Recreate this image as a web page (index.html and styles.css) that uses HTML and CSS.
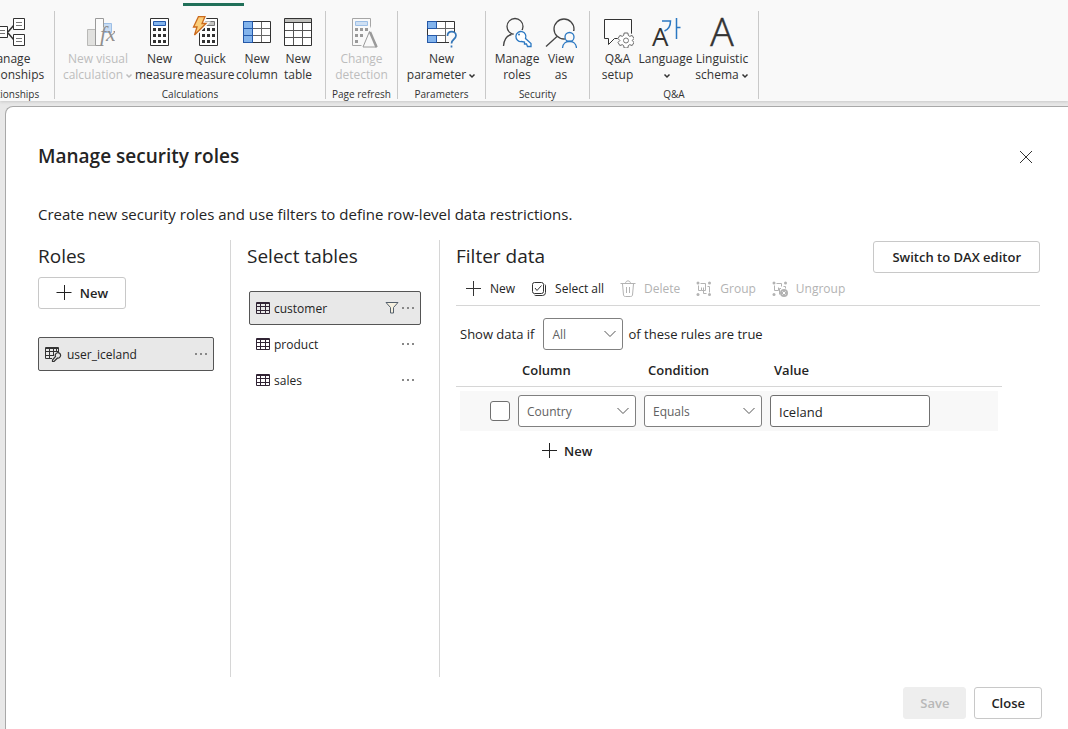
FILE: index.html
```html
<!DOCTYPE html>
<html lang="en">
<head>
<meta charset="utf-8">
<title>Manage security roles</title>
<link rel="stylesheet" href="styles.css">
</head>
<body>
<header class="ribbon">
  <div class="ribbon-tab"></div>
  <section class="group group-relationships">
    <div class="group-items">
      <button class="tool" type="button">
        <svg width="34" height="32" viewBox="0 0 34 32" fill="none" stroke="#333"><path d="M17 16l6-7M17 17l6 7" stroke-width="1.5"/><path fill="#fff" d="M22.500 2.500h11v11h-11zM22.500 18.500h11v11h-11zM5.500 10.500h11v11h-11z"/><path stroke="#777" d="M25 6.500h6M25 9.500h6M25 22.500h6M25 25.500h6M8 14.500h6M8 17.500h6"/></svg>
        <span>Manage<br>relationships</span>
      </button>
    </div>
    <h2>Relationships</h2>
  </section>
  <section class="group group-calculations">
    <div class="group-items">
      <button class="tool tool-visual" type="button" disabled>
        <svg width="34" height="32" viewBox="-4 0 34 32"><path fill="#e1e1df" stroke="#b9b9b7" d="M2.500 13.500h8v16h-8z"/><path fill="#c7dcf3" stroke="#9dbfe6" d="M18.500 7.500h8v9h-8z"/><path fill="#fbfbfb" stroke="#9a9a9a" d="M18.500 29.500h-8v-27h8v9"/><text class="fx" x="15" y="25">fx</text></svg>
        <span>New visual<br>calculation<svg class="caret" width="8" height="6" viewBox="0 0 8 6"><path d="M1.500 1.500L4 4l2.500-2.500"/></svg></span>
      </button>
      <button class="tool tool-measure" type="button">
        <svg width="20" height="32" viewBox="0 0 20 32"><path fill="#fff" stroke="#333" d="M.5 2.500h18v27H.5z"/><path fill="#83b4ec" stroke="#2459ab" d="M3.500 5.500h12v4h-12z"/><path fill="#333" d="M3 12h3v3H3zM8 12h3v3H8zM13 12h3v3h-3zM3 18h3v3H3zM8 18h3v3H8zM13 18h3v3h-3zM3 24h3v3H3zM8 24h3v3H8zM13 24h3v3h-3z"/></svg>
        <span>New<br>measure</span>
      </button>
      <button class="tool tool-quick" type="button">
        <svg width="38" height="32" viewBox="0 0 38 32"><path fill="#fff" stroke="#333" d="M8.500 2.500h18v27h-18z"/><path fill="#c5c5c2" stroke="#777" d="M11.500 5.500h12v4h-12z"/><path fill="#333" d="M11 12h3v3h-3zM16 12h3v3h-3zM21 12h3v3h-3zM11 18h3v3h-3zM16 18h3v3h-3zM21 18h3v3h-3zM11 24h3v3h-3zM16 24h3v3h-3zM21 24h3v3h-3z"/><path fill="#fbcf7b" stroke="#f9f9f9" stroke-width="4" d="M7.500.5h6.500l-3 7h4L3.500 19l2.500-8H2.500z"/><path fill="#fbcf7b" stroke="#cc6a1c" stroke-width="1.300" d="M7.500.5h6.500l-3 7h4L3.500 19l2.500-8H2.500z"/></svg>
        <span>Quick<br>measure</span>
      </button>
      <button class="tool tool-column" type="button">
        <svg width="28" height="32" viewBox="0 0 28 32"><path fill="#fff" d="M0 5h28v22H0z"/><path fill="#83b4ec" d="M0 5h10v22H0z"/><path fill="none" stroke="#666" d="M10 12.500h17M10 19.500h17M18.500 6v20"/><path fill="none" stroke="#333" d="M.5 5.500h27v21H.5z"/><path fill="none" stroke="#2459ab" d="M.5 5.500h9v21h-9zM1 12.500h9M1 19.500h9"/></svg>
        <span>New<br>column</span>
      </button>
      <button class="tool tool-table" type="button">
        <svg width="28" height="32" viewBox="0 0 28 32"><path fill="#fff" d="M0 2h28v28H0z"/><path fill="#bebebb" d="M1 3h26v4H1z"/><path fill="none" stroke="#555" d="M1 14.500h26M1 21.500h26M9.500 7v22M18.500 7v22"/><path fill="none" stroke="#333" d="M.5 2.500h27v27H.5zM1 6.500h26"/></svg>
        <span>New<br>table</span>
      </button>
    </div>
    <h2>Calculations</h2>
  </section>
  <section class="group group-refresh">
    <div class="group-items">
      <button class="tool" type="button" disabled>
        <svg width="34" height="32" viewBox="-6 0 34 32"><path fill="#f9f9f9" stroke="#a6a6a6" d="M2.500 2.500h18v27h-18z"/><path fill="#cfe0f3" stroke="#9dbfe6" d="M5.500 5.500h12v4h-12z"/><path fill="#9a9a9a" d="M5 12h3v3H5zM10 12h3v3h-3zM15 12h3v3h-3zM5 18h3v3H5zM10 18h3v3h-3zM5 24h3v3H5z"/><path fill="#f9f9f9" stroke="#f9f9f9" stroke-width="4" d="M20 15l-7 16h14z"/><path fill="#f9f9f9" stroke="#9a9a9a" d="M19.500 15.500L13 31h14z"/><path stroke="#9a9a9a" stroke-width="2.500" d="M20 16l6.500 15"/></svg>
        <span>Change<br>detection</span>
      </button>
    </div>
    <h2>Page refresh</h2>
  </section>
  <section class="group group-parameters">
    <div class="group-items">
      <button class="tool" type="button">
        <svg width="31" height="32" viewBox="0 0 31 32"><path fill="#fff" d="M1 5h28v21H1z"/><path fill="#83b4ec" d="M1 5h10v7H1zM1 19h10v7H1z"/><path fill="none" stroke="#666" d="M10 12.500h18M10 19.500h11M19.500 6v20"/><path fill="none" stroke="#333" d="M1.500 5.500h27v21h-27z"/><path fill="none" stroke="#2459ab" d="M1.500 5.500h9v7h-9zM1.500 19.500h9v7h-9z"/><path fill="#f9f9f9" d="M20 16h11v16h-8v-6h-3z"/><path fill="none" stroke="#3576b8" stroke-width="1.700" d="M21.500 20c0-6 8.500-5.500 8.500-.5 0 4-4.500 3.500-4.500 8M25.500 29.500v2"/></svg>
        <span>New<br>parameter<svg class="caret" width="8" height="6" viewBox="0 0 8 6"><path d="M1.500 1.500L4 4l2.500-2.500"/></svg></span>
      </button>
    </div>
    <h2>Parameters</h2>
  </section>
  <section class="group group-security">
    <div class="group-items">
      <button class="tool tool-roles" type="button">
        <svg width="30" height="32" viewBox="0 0 30 32" fill="none" stroke="#444" stroke-width="1.300"><circle cx="13" cy="10.500" r="8"/><path d="M1.500 30C2 23 5 19.500 9.500 18.500"/><path fill="#f9f9f9" stroke="#f9f9f9" stroke-width="4" d="M23 20a5 5 0 1 0-3 5.500l2.500 2 2 .5v2h4v-3z"/><path fill="#fff" stroke="#2b78c2" d="M23.500 22.500a5 5 0 1 0-4 3l3 .5v2h2l1 2.500h3.500v-3z"/><circle cx="17" cy="18.500" r="1" fill="#2b78c2" stroke="none"/></svg>
        <span>Manage<br>roles</span>
      </button>
      <button class="tool tool-view" type="button">
        <svg width="32" height="32" viewBox="0 0 32 32" fill="none" stroke="#444" stroke-width="1.300"><circle cx="19" cy="13" r="10"/><path d="M12 20.500L1 30.500"/><path fill="#f9f9f9" stroke="none" d="M19 15h13v17H17v-8h3z"/><g stroke="#2b78c2"><circle cx="24.500" cy="21" r="4.500"/><path d="M17.500 32c.5-9 13.500-9 14 0"/></g></svg>
        <span>View<br>as</span>
      </button>
    </div>
    <h2>Security</h2>
  </section>
  <section class="group group-qa">
    <div class="group-items">
      <button class="tool tool-qa" type="button">
        <svg width="32" height="32" viewBox="0 0 32 32" fill="none" stroke="#333"><path fill="#fdfdfd" d="M2.500 3.500h27v19h-17l-6 6v-6h-4z"/><circle cx="24" cy="24" r="8.500" fill="#f9f9f9" stroke="none"/><path fill="#fff" stroke="#666" stroke-linejoin="round" d="M22.200 17h3.600l.6 2.500 1.300.8 2.500-.8 1.800 3.100-1.900 1.900 1.900 1.900-1.800 3.100-2.500-.8-1.300.8-.6 2.500h-3.600l-.6-2.500-1.300-.8-2.500.8L16 26.400l1.900-1.900L16 22.600l1.800-3.100 2.500.8 1.300-.8z"/><circle cx="24" cy="24.500" r="2.500" stroke="#777"/></svg>
        <span>Q&amp;A<br>setup</span>
      </button>
      <button class="tool tool-language" type="button">
        <svg width="30" height="32" viewBox="0 0 30 32"><path fill="none" stroke="#2b78c2" stroke-width="1.500" d="M11 5h8.500c0 5-2.500 8.500-6 10M25.500 2v21M26 11.500h3.500"/><text class="letter-small" x="1" y="30">A</text></svg>
        <span>Language<br><svg class="caret" width="8" height="6" viewBox="0 0 8 6"><path d="M1.500 1.500L4 4l2.500-2.500"/></svg></span>
      </button>
      <button class="tool tool-linguistic" type="button">
        <svg width="28" height="32" viewBox="0 0 28 32"><text class="letter-large" x="14" y="30">A</text></svg>
        <span>Linguistic<br>schema<svg class="caret" width="8" height="6" viewBox="0 0 8 6"><path d="M1.500 1.500L4 4l2.500-2.500"/></svg></span>
      </button>
    </div>
    <h2>Q&amp;A</h2>
  </section>
</header>

<main class="dialog" role="dialog" aria-labelledby="dialog-title">
  <div class="dialog-head">
    <h1 id="dialog-title">Manage security roles</h1>
    <button class="plain close-icon" type="button" aria-label="Close dialog">
      <svg width="14" height="14" viewBox="0 0 14 14"><path fill="none" stroke="#333" d="M1 1l12 12M13 1L1 13"/></svg>
    </button>
  </div>
  <p class="intro">Create new security roles and use filters to define row-level data restrictions.</p>

  <div class="panes">
    <section class="pane pane-roles">
      <h2>Roles</h2>
      <button class="btn btn-new" type="button">
        <svg width="16" height="16" viewBox="0 0 16 16"><path stroke="#222" d="M.5 7.500h15M8.500 0v15"/></svg>New
      </button>
      <div class="item item-role selected">
        <svg width="17" height="16" viewBox="0 0 17 16" fill="none" stroke="#333"><path d="M7 12.500H.5v-11h13v5M1 2.500h12M1 5.500h12M1 9.500h7M4.500 3v9M8.500 3v7M11.500 3v3"/><path stroke-width="1.200" d="M10.500 10.500a2.700 2.700 0 1 1 2 1.500L9 15.500H7.500V14z"/></svg>
        <span class="item-name">user_iceland</span>
        <button class="plain" type="button" aria-label="More options"><svg width="12" height="4" viewBox="0 0 12 4" fill="#888"><path d="M0 1h2v2H0zM5 1h2v2H5zM10 1h2v2h-2z"/></svg></button>
      </div>
    </section>

    <section class="pane pane-tables">
      <h2>Select tables</h2>
      <ul class="tables">
        <li class="item selected">
          <svg width="14" height="14" viewBox="0 0 14 14" fill="none" stroke="#312434"><path d="M.5 1.500h13v11H.5zM1 2.500h12M1 5.500h12M1 9.500h12M4.500 3v9M9.500 3v9"/></svg>
          <span class="item-name">customer</span>
          <svg class="funnel" width="14" height="12" viewBox="0 0 14 12"><path fill="#f6f0df" stroke="#55606c" d="M1 .5h12l-4.500 5v5.500h-3V5.500z"/></svg>
          <button class="plain" type="button" aria-label="More options"><svg width="12" height="4" viewBox="0 0 12 4" fill="#888"><path d="M0 1h2v2H0zM5 1h2v2H5zM10 1h2v2h-2z"/></svg></button>
        </li>
        <li class="item">
          <svg width="14" height="14" viewBox="0 0 14 14" fill="none" stroke="#312434"><path d="M.5 1.500h13v11H.5zM1 2.500h12M1 5.500h12M1 9.500h12M4.500 3v9M9.500 3v9"/></svg>
          <span class="item-name">product</span>
          <button class="plain" type="button" aria-label="More options"><svg width="12" height="4" viewBox="0 0 12 4" fill="#888"><path d="M0 1h2v2H0zM5 1h2v2H5zM10 1h2v2h-2z"/></svg></button>
        </li>
        <li class="item">
          <svg width="14" height="14" viewBox="0 0 14 14" fill="none" stroke="#312434"><path d="M.5 1.500h13v11H.5zM1 2.500h12M1 5.500h12M1 9.500h12M4.500 3v9M9.500 3v9"/></svg>
          <span class="item-name">sales</span>
          <button class="plain" type="button" aria-label="More options"><svg width="12" height="4" viewBox="0 0 12 4" fill="#888"><path d="M0 1h2v2H0zM5 1h2v2H5zM10 1h2v2h-2z"/></svg></button>
        </li>
      </ul>
    </section>

    <section class="pane pane-filter">
      <div class="filter-head">
        <h2>Filter data</h2>
        <button class="btn btn-dax" type="button">Switch to DAX editor</button>
      </div>
      <div class="toolbar">
        <button class="plain" type="button"><svg width="16" height="16" viewBox="0 0 16 16"><path stroke="#333" d="M0 7.500h15M7.500 0v15"/></svg>New</button>
        <button class="plain" type="button"><svg width="16" height="16" viewBox="0 0 16 16" fill="none" stroke="#333"><rect x="1.500" y="1.500" width="11" height="11" rx="2"/><path d="M4 7l2 2.500L10.500 4.500M14 3.500c.5.500.5 1 .5 1.500v6.500a3 3 0 0 1-3 3H5c-.5 0-1 0-1.500-.5"/></svg>Select all</button>
        <button class="plain" type="button" disabled><svg width="16" height="18" viewBox="0 0 16 18" fill="none" stroke="#b3b3b3"><path d="M.5 3.500h15M5.500 3.500c0-3.500 5-3.500 5 0M2.500 4l1 11c.2 1 .8 1.500 2 1.500h5c1.200 0 1.800-.5 2-1.500l1-11M6.500 7v6M9.500 7v6"/></svg>Delete</button>
        <button class="plain" type="button" disabled><svg width="16" height="16" viewBox="0 0 16 16" fill="none" stroke="#b3b3b3"><path d="M4.500 2.500h5v7h-4v-3M2.500 4.500v5h3M11.500 5.500h2v6M7.500 6.500v6h3"/><g fill="#b3b3b3" stroke="none"><circle cx="2" cy="2" r="1.500"/><circle cx="13.500" cy="2" r="1.500"/><circle cx="2" cy="13.500" r="1.500"/><circle cx="13.500" cy="13.500" r="1.500"/></g></svg>Group</button>
        <button class="plain" type="button" disabled><svg width="16" height="16" viewBox="0 0 16 16" fill="none" stroke="#b3b3b3"><path d="M4.500 2.500h5v3M2.500 4.500v5h4v-3M11.500 5.500h2v2M9 7.500H7.500v6"/><g fill="#b3b3b3" stroke="none"><circle cx="2" cy="2" r="1.500"/><circle cx="13.500" cy="2" r="1.500"/><circle cx="2" cy="13.500" r="1.500"/><circle cx="12" cy="12" r="4"/></g><path stroke="#fff" d="M10.500 10.500l3 3M13.500 10.500l-3 3"/></svg>Ungroup</button>
      </div>
      <div class="match">
        <label for="match-mode">Show data if</label>
        <div class="select select-mode">
          <select id="match-mode"><option>All</option><option>Any</option></select>
          <svg width="12" height="8" viewBox="0 0 12 8"><path d="M.5 1L6 6.500 11.500 1"/></svg>
        </div>
        <span>of these rules are true</span>
      </div>
      <table class="rules">
        <thead>
          <tr><th class="col-check"></th><th class="col-pick">Column</th><th class="col-pick">Condition</th><th>Value</th></tr>
        </thead>
        <tbody>
          <tr>
            <td class="cell-check"><input class="check" type="checkbox" aria-label="Select rule"></td>
            <td><div class="select"><select aria-label="Column"><option>Country</option></select><svg width="12" height="8" viewBox="0 0 12 8"><path d="M.5 1L6 6.500 11.500 1"/></svg></div></td>
            <td><div class="select"><select aria-label="Condition"><option>Equals</option></select><svg width="12" height="8" viewBox="0 0 12 8"><path d="M.5 1L6 6.500 11.500 1"/></svg></div></td>
            <td><input class="value" type="text" value="Iceland" aria-label="Value"></td>
          </tr>
        </tbody>
      </table>
      <button class="plain add-rule" type="button"><svg width="16" height="16" viewBox="0 0 16 16"><path stroke="#222" d="M0 7.500h15M7.500 0v15"/></svg>New</button>
    </section>
  </div>

  <footer class="actions">
    <button class="btn" type="button" disabled>Save</button>
    <button class="btn" type="button">Close</button>
  </footer>
</main>
</body>
</html>
```
FILE: styles.css
```css
* { box-sizing: border-box; }

body {
  margin: 0;
  min-height: 100vh;
  display: flex;
  flex-direction: column;
  background: #e8e8e8;
  color: #242424;
  font-family: "Open Sans", "Noto Sans", sans-serif;
  font-size: 13px;
  line-height: 20px;
  overflow-x: hidden;
}

h1, h2, p, ul { margin: 0; padding: 0; }
button, input, select { font: inherit; color: inherit; }
svg { flex: none; }

/* Ribbon */
.ribbon {
  position: relative;
  display: flex;
  height: 101px;
  padding-top: 11px;
  background: #f9f9f9;
  box-shadow: 0 1px 3px #c8c8c8;
}
.ribbon-tab {
  position: absolute;
  top: 3px;
  left: 183px;
  width: 61px;
  height: 3px;
  background: #217059;
}
.group {
  display: flex;
  flex-direction: column;
  flex: none;
  height: 88px;
  border-right: 1px solid #c9c9c9;
}
.group-items { display: flex; justify-content: center; height: 78px; padding-top: 5px; }
.group h2 {
  color: #333;
  font-size: 10px;
  font-weight: 400;
  line-height: 10px;
  text-align: center;
  white-space: nowrap;
}
.group-relationships { width: 93px; margin-left: -38px; }
.group-calculations { width: 271px; }
.group-calculations .group-items { padding-right: 1px; }
.group-refresh { width: 72px; }
.group-parameters { width: 88px; }
.group-security { width: 104px; }
.group-security .group-items { padding-right: 3px; }
.group-qa { width: 169px; }
.tool {
  display: flex;
  flex-direction: column;
  align-items: center;
  gap: 3px;
  padding: 0;
  border: 0;
  background: none;
  color: #333;
  font-size: 12px;
  line-height: 16px;
  white-space: nowrap;
}
.tool:disabled { color: #bdbdbd; }
.tool-visual { width: 74px; }
.tool-measure { width: 49px; }
.tool-quick { width: 52px; }
.tool-column { width: 42px; }
.tool-table { width: 40px; }
.tool-roles { width: 50px; }
.tool-view { width: 38px; }
.tool-qa { width: 41px; }
.tool-language { width: 55px; }
.tool-linguistic { width: 58px; }
.caret { margin-left: 2px; fill: none; stroke: currentColor; stroke-width: 1.5; }
.fx { font: italic 22px "Liberation Serif", serif; fill: #8f8f8f; }
.letter-small { font-size: 26px; font-weight: 400; fill: #333; }
.letter-large { font-size: 39px; font-weight: 300; fill: #333; stroke: #333; stroke-width: 0.5; text-anchor: middle; }

/* Dialog */
.dialog {
  position: relative;
  flex: 1;
  display: flex;
  flex-direction: column;
  margin: 5px 0 0 5px;
  padding: 36px 26px 10px 32px;
  border: 1px solid #a8a8a8;
  border-width: 1px 0 0 1px;
  border-radius: 8px 0 0 0;
  background: #fff;
}
.dialog-head { display: flex; align-items: center; justify-content: space-between; height: 28px; }
.dialog-head h1 { padding-bottom: 2px; font-size: 19px; font-weight: 600; line-height: 26px; }
.close-icon { margin-right: 9px; }
.intro { margin: 33px 0 16px; font-size: 15px; }
.plain {
  display: flex;
  align-items: center;
  padding: 0;
  border: 0;
  background: none;
}
.btn {
  display: flex;
  align-items: center;
  justify-content: center;
  height: 32px;
  padding: 0 16px;
  border: 1px solid #c8c8c8;
  border-radius: 3px;
  background: #fff;
  font-weight: 600;
}
.btn:disabled { border-color: #eee; background: #eee; color: #b8b8b8; }

.panes { flex: 1; display: flex; padding-right: 2px; }
.pane h2 { font-size: 19px; font-weight: 400; line-height: 32px; }
.pane-roles { width: 193px; padding-right: 16px; border-right: 1px solid #d6d6d6; }
.pane-tables { width: 209px; padding: 0 18px 0 16px; border-right: 1px solid #d6d6d6; }
.pane-filter { flex: 1; min-width: 0; padding-left: 16px; }

.btn-new { width: 88px; margin: 5px 0 28px; gap: 8px; padding: 0; }
.item {
  display: flex;
  align-items: center;
  height: 34px;
  padding: 0 6px;
  border: 1px solid transparent;
  border-radius: 2px;
  font-size: 12px;
}
.item.selected { border-color: #555; background: #e8e8e8; }
.item-name { flex: 1; padding: 2px 0 0 4px; }
.item-role .item-name { padding-left: 5px; }
.funnel { margin-right: 3px; }
.tables { display: grid; gap: 2px; margin: 19px 0 0 2px; list-style: none; }

.filter-head { display: flex; justify-content: space-between; height: 33px; }
.btn-dax { align-self: flex-end; padding: 0 18px; }
.toolbar {
  display: flex;
  height: 33px;
  padding: 0 0 1px 10px;
  gap: 16px;
  border-bottom: 1px solid #d6d6d6;
  font-size: 12px;
}
.toolbar .plain { gap: 8px; }
.toolbar .plain:disabled { color: #b3b3b3; }
.match { display: flex; align-items: center; gap: 5px; margin: 12px 0 10px 4px; }
.match label { margin-right: 4px; }

.select { position: relative; width: 118px; height: 32px; }
.select select {
  width: 100%;
  height: 100%;
  padding: 2px 24px 0 8px;
  border: 1px solid #808080;
  border-radius: 3px;
  background: #fff;
  color: #616161;
  font-size: 12px;
  appearance: none;
}
.select svg {
  position: absolute;
  top: 12px;
  right: 7px;
  fill: none;
  stroke: #555;
  pointer-events: none;
}
.select-mode { width: 80px; }

.rules { width: 546px; max-width: 100%; table-layout: fixed; border-spacing: 0; }
.rules th {
  padding: 0 4px 6px;
  border-bottom: 1px solid #d6d6d6;
  font-weight: 600;
  text-align: left;
}
.rules td {
  height: 44px;
  padding: 0;
  border-top: 4px solid transparent;
  background: #f8f8f8;
  background-clip: padding-box;
}
.rules td:first-child { border-left: 4px solid transparent; }
.rules td:last-child { border-right: 4px solid transparent; }
.rules .col-check { width: 62px; }
.rules .col-pick { width: 126px; }
.check {
  display: block;
  width: 20px;
  height: 20px;
  margin: 0 8px 0 auto;
  border: 1px solid #707070;
  border-radius: 3px;
  background: #fff;
  appearance: none;
}
.value {
  display: block;
  width: 160px;
  height: 32px;
  padding: 2px 8px 0;
  border: 1px solid #707070;
  border-radius: 3px;
  background: #fff;
}
.add-rule { gap: 6px; margin: 10px 0 0 86px; font-weight: 600; }

.actions { display: flex; justify-content: flex-end; gap: 8px; padding-top: 10px; }
```
